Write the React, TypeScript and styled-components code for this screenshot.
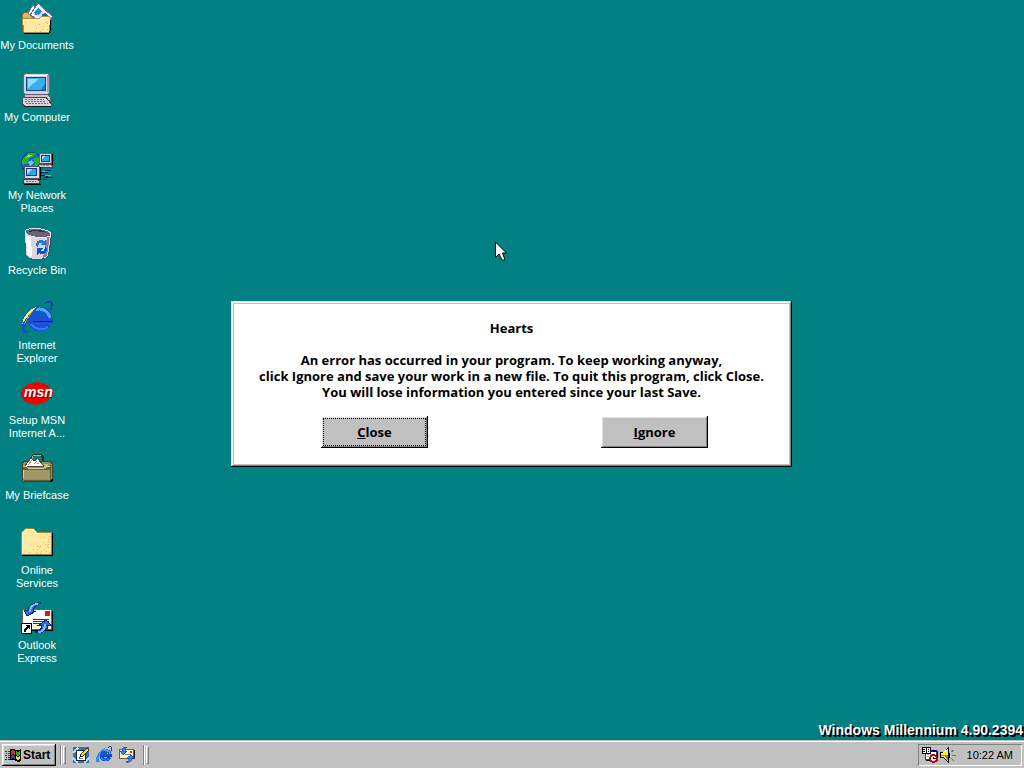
import React from "react";
import styled, { createGlobalStyle, css } from "styled-components";

const SANS = `"Liberation Sans", Arial, sans-serif`;
const SYSTEM = `"Open Sans", "Liberation Sans", sans-serif`;

const GlobalStyle = createGlobalStyle`
  *, *::before, *::after { box-sizing: border-box; }
  html, body { margin: 0; padding: 0; }
  body { background: #008080; font-family: ${SANS}; overflow: hidden; }
  button { font-family: inherit; }
`;

const Screen = styled.div`
  position: relative;
  display: flex;
  flex-direction: column;
  min-height: 100vh;
  background: #008080;
`;

const Desktop = styled.main`
  flex: 1;
  display: flex;
  justify-content: space-between;
`;

const IconColumn = styled.nav`
  display: grid;
  grid-template-rows: 72px 78px;
  grid-auto-rows: 75px;
  width: 74px;
  padding-top: 3px;
`;

const Shortcut = styled.a`
  display: flex;
  flex-direction: column;
  align-items: center;
  gap: 4px;
  color: #fff;
  font-size: 11px;
  line-height: 13px;
  text-align: center;
  text-decoration: none;
  white-space: pre;
`;

const IconArt = styled.svg<{ $size: number }>`
  display: block;
  flex: none;
  width: ${(p) => p.$size}px;
  height: ${(p) => p.$size}px;
  overflow: visible;
  shape-rendering: crispEdges;
`;

const Watermark = styled.p`
  align-self: flex-end;
  margin: 0;
  padding: 0 1px 2px 0;
  color: #fff;
  font-size: 14px;
  font-weight: bold;
  line-height: 16px;
  text-shadow: 1px 1px 0 #000, 2px 2px 0 #000;
`;

const DialogLayer = styled.div`
  position: absolute;
  inset: 0;
  display: grid;
  place-items: center;
  padding-right: 1px;
`;

const Dialog = styled.section`
  width: 561px;
  max-width: 100%;
  padding: 19px 0;
  background: #fff;
  color: #000;
  font-family: ${SYSTEM};
  font-size: 13px;
  font-weight: bold;
  line-height: 16px;
  text-align: center;
  box-shadow:
    inset -1px -1px 0 #000,
    inset 1px 1px 0 #dfdfdf,
    inset -2px -2px 0 #808080,
    inset 2px 2px 0 #fff,
    inset 3px 3px 0 #c0c0c0,
    inset -3px -3px 0 #c0c0c0;
`;

const DialogTitle = styled.h1`
  margin: 0 0 16px;
  font: inherit;
`;

const DialogText = styled.p`
  margin: 0 0 16px;
`;

const DialogActions = styled.div`
  display: flex;
  justify-content: center;
  gap: 173px;
  padding-left: 6px;
`;

const raised = css`
  border: 0;
  background: #c0c0c0;
  box-shadow:
    inset -1px -1px 0 #000,
    inset 1px 1px 0 #fff,
    inset -2px -2px 0 #808080,
    inset 2px 2px 0 #dfdfdf;
`;

const DialogButton = styled.button<{ $focused?: boolean }>`
  ${raised}
  width: 107px;
  height: 32px;
  padding: 0;
  color: #000;
  font-size: 13px;
  font-weight: bold;
  line-height: 16px;
  outline: ${(p) => (p.$focused ? "1px dotted #000" : "none")};
  outline-offset: -3px;
`;

const Taskbar = styled.footer`
  display: flex;
  align-items: center;
  height: 28px;
  padding: 2px 2px 0;
  background: #c0c0c0;
  box-shadow: inset 0 1px 0 #c0c0c0, inset 0 2px 0 #fff;
`;

const StartButton = styled.button`
  ${raised}
  display: flex;
  align-items: center;
  gap: 2px;
  width: 54px;
  height: 22px;
  padding: 0 3px;
  color: #000;
  font-size: 12px;
  font-weight: bold;
  line-height: 14px;
`;

const Divider = styled.span`
  width: 2px;
  height: 20px;
  margin-left: 4px;
  border-left: 1px solid #808080;
  border-right: 1px solid #fff;
`;

const Grip = styled.span`
  width: 3px;
  height: 18px;
  margin-left: 1px;
  border: 1px solid;
  border-color: #fff #808080 #808080 #fff;
`;

const QuickLaunch = styled.div`
  display: flex;
  gap: 7px;
  padding: 0 4px 0 7px;
`;

const QuickButton = styled.button`
  width: 16px;
  height: 16px;
  padding: 0;
  border: 0;
  background: transparent;
`;

const Tray = styled.div`
  display: flex;
  align-items: center;
  gap: 2px;
  height: 22px;
  margin-left: auto;
  padding: 0 9px 0 4px;
  box-shadow: inset 1px 1px 0 #808080, inset -1px -1px 0 #fff;
`;

const Clock = styled.time`
  margin-left: 9px;
  color: #000;
  font-size: 11px;
  line-height: 13px;
`;

const Pointer = styled.svg`
  position: absolute;
  left: 495px;
  top: 241px;
  width: 12px;
  height: 20px;
  pointer-events: none;
`;

function Art({ size = 32, children }: { size?: number; children: React.ReactNode }) {
  return (
    <IconArt $size={size} viewBox={`0 0 ${size} ${size}`} aria-hidden="true">
      {children}
    </IconArt>
  );
}

const Documents = () => (
  <Art>
    <path d="M1 27V12l2-3h6l2 3h17v15z" fill="#d8b860" stroke="#806830" />
    <path d="M7 10 12 2l7 9-5 6z" fill="#fff" stroke="#6080b0" />
    <path d="M9 12 17 0 32 14 23 20z" fill="#fff" stroke="#5070a8" />
    <path d="m12 11 5-7 9 9-3 4z" fill="#c8e4ff" />
    <path d="m13 9 4 1-2 3zM17 5l4 4-4 3-3-4z" fill="#3080d8" />
    <path d="m21 11 3-1 3 3-5 2z" fill="#2060b0" />
    <path d="M1 15h18l3-2h6l2 2-2 14H3z" fill="#ffe9a0" stroke="#b08840" />
    <path d="M2 16h17l3-2h5" stroke="#fffbd8" fill="none" />
    <path d="M15 25.500h1m2-4h1m2 5h1m2-7h1m-3 4h1m3 3h1m-1-6h1m-8 8h1m-6 0h1" stroke="#e8b070" />
    <path d="M3 30h25l1-2 1-11" stroke="#000" fill="none" />
  </Art>
);

const Computer = () => (
  <Art>
    <path d="M5 0 7-2h19l3 1v19l-3 2H8l-3-2z" fill="#000" />
    <path d="M2.500-.5l2-1h22l2 1v18l-2 2h-22l-2-2z" fill="#d4d0d8" stroke="#686880" />
    <path d="M4 0h22" stroke="#fff" />
    <path d="M27 0v17" stroke="#a09cb0" strokeWidth="2" />
    <rect x="5" y="2" width="20" height="14" fill="#184890" />
    <rect x="6" y="3" width="18" height="12" fill="#38b0f0" />
    <path d="M7 4h11L7 13z" fill="#90e0ff" />
    <path d="M20 15 24 8v7z" fill="#1880d0" />
    <path d="M3 19h23l3 3v3H3z" fill="#c8c4cc" stroke="#605c70" />
    <path d="M19 22.500h7" stroke="#404050" />
    <path d="M2 22h23l6 8-1 1H4l-3-2z" fill="#d8d4dc" stroke="#484858" />
    <path d="M4 24.500h19M4 26.500h21M5 28.500h22" stroke="#706c80" strokeDasharray="2 1" />
    <path d="M3 31.500h27" stroke="#201820" />
  </Art>
);

const Monitor = ({ x, y, scale = 1 }: { x: number; y: number; scale?: number }) => (
  <g transform={`translate(${x} ${y}) scale(${scale})`}>
    <path d="M1 1h16v13H1z" fill="#000" />
    <path d="M0 0h15v12H0z" fill="#dcd8e0" stroke="#505068" />
    <path d="M2 2h11v8H2z" fill="#103878" />
    <path d="M3 3h9v6H3z" fill="#28a8e8" />
    <path d="M3 3h6L3 8z" fill="#a0e8ff" />
    <path d="M0 13h14l2 4H-1z" fill="#d0ccd4" stroke="#404050" />
    <path d="M2 15h10" stroke="#787488" strokeDasharray="2 1" />
  </g>
);

const Network = () => (
  <Art>
    <circle cx="11" cy="10" r="10.5" fill="#1868c0" stroke="#084858" />
    <path d="M2 5 7 0h8l-3 4-4 1-1 5-5 2-1-3zM12 6l5-2 3 7-4 7-5-4 3-4zM3 14l4 2 2 4-5-2z" fill="#28b030" />
    <path d="M4 5 8 2h4L8 4z" fill="#a0f070" />
    <path d="m7 9 4-2 2 3-4 3z" fill="#70c8f8" />
    <Monitor x={18} y={0} scale={0.85} />
    <path d="M20 19h6l-2-2h6m-10 5h8l-3 2h7m-10 2h4" stroke="#001858" fill="none" />
    <path d="M21 18h5m-2 4h6" stroke="#60b0e0" />
    <Monitor x={3} y={13} />
    <path d="M3 31h17" stroke="#000" />
  </Art>
);

const RecycleBin = () => (
  <Art>
    <path d="m5 3 2 25 6 3 9 0 6-3L31 6z" fill="#504868" />
    <path d="m4 3 1 24c2 3 7 4 11 4 5 0 9-1 11-3L30 6z" fill="#d8d4e0" />
    <path d="m5 8 1 19 5 2-1-20z" fill="#fff" />
    <path d="m26 9 3-2-3 21-4 2z" fill="#888498" />
    <ellipse cx="17" cy="5" rx="13" ry="4.5" transform="rotate(6 17 5)" fill="#686478" stroke="#e8e4f0" />
    <path d="M7 4c3-3 15-3 19 1-4-2-14-2-19-1z" fill="#383448" />
    <path d="M15 18c0-5 4-8 8-5l2-2v6h-6l2-2c-2-1-4 1-4 4z" fill="#1878e8" />
    <path d="M26 20c0 5-4 8-8 5l-2 2v-7h6l-2 3c2 1 4-1 4-4z" fill="#1050c8" />
  </Art>
);

const ExplorerShape = () => (
  <>
    <path
      d="M27 21c-2 3-4 4-8 4-6 0-9-4-9-9s4-9 9-9 9 4 9 9v.5H11"
      fill="none"
      stroke="#1850d8"
      strokeWidth="7"
    />
    <path d="M15 7c5-3 12 1 14 8" fill="none" stroke="#48a8ff" strokeWidth="3" />
    <path d="M10 21c4 5 11 7 17 3" fill="none" stroke="#3080f0" strokeWidth="2" />
    <path d="M12 18.500h20" stroke="#082070" />
    <path d="M14 13h9c0-3-8-4-9 0z" fill="#0868a0" />
  </>
);

const Explorer = () => (
  <Art>
    <ExplorerShape />
    <path d="M24 0c4-2 7-2 7 2 0 2-1 4-2 5" fill="none" stroke="#0838a0" strokeWidth="1.5" />
    <path d="M20 2C9 4 0 17 1 27c0 4 5 4 9 1-3 1-6 1-6-2C5 18 11 8 20 2z" fill="#1850b8" />
    <path d="M17 3C8 6 1 15 1 22 5 15 9 9 17 3z" fill="#ffe890" />
    <path d="M12 8C7 12 4 17 3 22c4-6 6-10 9-14z" fill="#b89830" />
  </Art>
);

const Msn = () => (
  <Art>
    <ellipse cx="16" cy="16" rx="15" ry="10.5" transform="rotate(-8 16 16)" fill="#a83000" />
    <ellipse cx="15" cy="15" rx="15" ry="10.5" transform="rotate(-8 15 15)" fill="#f00000" />
    <text x="4" y="20" fill="#800000" fontFamily={SANS} fontSize="14" fontWeight="bold" fontStyle="italic">msn</text>
    <text x="3" y="19" fill="#fff" fontFamily={SANS} fontSize="14" fontWeight="bold" fontStyle="italic">msn</text>
  </Art>
);

const Briefcase = () => (
  <Art>
    <path d="M2 10h29l1 2v15l-2 2H2z" fill="#000" />
    <path d="M11 9V4l2-2h7l2 2v5" fill="none" stroke="#383010" strokeWidth="2" />
    <path d="M11 8V4l2-2h7" fill="none" stroke="#b8b078" />
    <path d="M1 11 3 8h26l2 3v15l-2 2H2l-1-2z" fill="#989060" stroke="#484020" />
    <path d="m4 13 6-8 4 3 2-3 7 8z" fill="#fff" stroke="#504830" />
    <path d="m7 12 4-5m2 4 3-3m0 3 2-1" stroke="#909090" />
    <path d="M2 14h3l2 2h17l2-2h4v3H2z" fill="#686030" />
    <path d="M2 17h27v9H2z" fill="#a09868" />
    <path d="M2 13h3l2 2h16l3-2h3M2 17v8" stroke="#d8d0a0" fill="none" />
    <path d="M29 12v15M3 27h26" stroke="#605830" />
    <path d="M23 11h4v3h-4z" fill="#c8c078" />
  </Art>
);

const Folder = () => (
  <Art>
    <path d="M1 27.500h30.500V5" fill="none" stroke="#000" />
    <path d="M.5 26.500V4.500l4-4h8l4 4h14v22z" fill="#ffe9a0" stroke="#a88030" />
    <path d="M1.500 25V5.500h15M5 1.500h7l3 3" fill="none" stroke="#fffbd0" />
    <path d="M8 24.500h1m3-3h1m3 4h1m2-7h1m-4 3h1m6 0h1m2-4h1m-2 6h1m3 1h1m-3-5h1m0-5h1m-5 2h1m-6 9h1m-4-7h1m10-5h1m-5 8h1m4 4h1m-11-6h1m-4 6h1" stroke="#f0a868" />
    <path d="M26 6.500h1m2 2h1m-3 3h1m-5-2h1m-2 5h1m4 2h1m-3 3h1m-6 4h1" stroke="#f0b880" />
  </Art>
);

const BlueArrows = () => (
  <>
    <path d="M20 0C12-1 7 3 7 7H3l3 6 9-5h-3c0-4 3-6 8-8z" fill="#3068e0" stroke="#082880" />
    <path d="M17 1c-6 0-8 3-8 8" fill="none" stroke="#80c0ff" strokeWidth="2" />
    <path d="M14 29c7 2 13-2 13-7h3l-5-5-7 5h3c0 4-2 6-7 7z" fill="#3068e0" stroke="#082880" />
    <path d="M17 29c5 0 7-3 7-8" fill="none" stroke="#80c0ff" strokeWidth="2" />
  </>
);

const Outlook = () => (
  <Art>
    <path d="M2 8h30v20H2z" fill="#000" />
    <path d="M1.500 6.500h29v20h-29z" fill="#fff" stroke="#686050" />
    <path d="M3 22h26v3H3z" fill="#fff0b0" />
    <path d="M24 8h5v5h-5z" fill="#d81820" />
    <path d="M12 16.500h16M12 18.500h16M12 20.500h12" stroke="#103890" />
    <BlueArrows />
    <path d="M.5 20.500h10v10H.5z" fill="#fff" stroke="#000" />
    <path d="M3 29c0-3 1-4 3-5L4 22h5v5l-1-2c-2 1-3 2-3 4z" fill="#000" />
  </Art>
);

const WindowsFlag = () => (
  <Art size={16}>
    <path d="M5 2c3-1 4 0 6 1 2 1 3 0 5-1v12c-2 1-3 1-5 0-2-1-3-2-6-1z" fill="#000" />
    <path d="M6 4c2-1 3-1 4 0v4C9 7 8 7 6 8z" fill="#f02020" />
    <path d="M11 4c1 1 3 1 4 0v4c-2 1-3 1-4 0z" fill="#20b020" />
    <path d="M6 9c2-1 3-1 4 0v3c-1-1-2-1-4 0z" fill="#2040e0" />
    <path d="M11 9c1 1 3 1 4 0v3c-1 1-3 1-4 0z" fill="#f8e010" />
    <path d="M0 4.500h2m1 0h2M1 6.500h1m1 0h2M0 8.500h2m1 0h2" stroke="#b01010" />
    <path d="M1 10.500h1m1 0h2M0 12.500h2m1 0h2" stroke="#102090" />
  </Art>
);

const ShowDesktop = () => (
  <Art size={16}>
    <path d="M0 0h16v16H0z" fill="#3870a8" />
    <path d="m0 6 5-5M0 11l5 5M11 16l5-5" stroke="#c0e0f8" strokeWidth="2" />
    <path d="M3.500 3.500h9v10h-9z" fill="#fff" stroke="#102848" />
    <path d="M6 11.500h4" stroke="#808080" fill="none" />
    <path d="m7 10 1-3 6-6 2 2-6 6z" fill="#ffd040" stroke="#403010" />
    <path d="m7 10 0-2 2 1z" fill="#000" />
  </Art>
);

const QuickExplorer = () => (
  <Art size={16}>
    <g transform="scale(.5)">
      <ExplorerShape />
      <path d="M24 1c5-3 9-2 6 7" fill="none" stroke="#0838a0" strokeWidth="2" />
      <path d="M20 1C8 4-1 18 0 28c2 4 6 3 10 1-4 1-5-2-4-6C7 16 12 7 20 1z" fill="#3090e8" />
    </g>
  </Art>
);

const QuickOutlook = () => (
  <Art size={16}>
    <path d="M1 3h15v9H1z" fill="#202020" />
    <path d="M.5 2.500h14v9H.5z" fill="#fff8d8" stroke="#706030" />
    <path d="M11 4h2v2h-2z" fill="#e02020" />
    <path d="M6 7.500h6" stroke="#7088a8" />
    <path d="M8 0C4 0 3 2 3 4H1l3 4 4-4H6c0-2 0-3 2-4zM7 15c5 1 6-2 6-4h2l-3-3-4 3h2c0 2-1 3-3 4z" fill="#3880f0" stroke="#103080" strokeWidth=".6" />
  </Art>
);

const Scheduler = () => (
  <Art size={16}>
    <path d="M4 4h12v10H4z" fill="#000" />
    <path d="M3.500 3.500h11v9h-11z" fill="#fff" stroke="#404040" />
    <path d="M8 3h7v2H8z" fill="#000080" />
    <path d="M5 7.500h2m1 0h2m1 0h2M5 9.500h2" stroke="#a0a0a0" />
    <path d="M0 0h9v7H0z" fill="#000" />
    <path d="M1 1.500h2M1 3.500h2M1 5.500h2M3.500 1v5M5 1.500h3M5 3.500h3M5 5.500h3M5.500 1v5M7.500 1v5" stroke="#fff" />
    <circle cx="11.500" cy="11.500" r="3.500" fill="#fff" stroke="#c00000" strokeWidth="1.700" />
    <path d="M11.500 9.500v2h2" fill="none" stroke="#000" />
  </Art>
);

const Speaker = () => (
  <Art size={16}>
    <path d="M.5 5.500h3l5-5v15l-5-5h-3z" fill="#f8f040" stroke="#000" />
    <path d="M1 8.500h3l4 5v-6z" fill="#989000" />
    <path d="M3 6 8 2" stroke="#fff" />
    <path d="M9.500 5.500v5" fill="none" stroke="#000" />
    <path d="m11 5 3-2m-2 5.500h4m-5 3 3 2" stroke="#707070" />
  </Art>
);

const shortcuts = [
  { label: "My Documents", Icon: Documents },
  { label: "My Computer", Icon: Computer },
  { label: "My Network\nPlaces", Icon: Network },
  { label: "Recycle Bin", Icon: RecycleBin },
  { label: "Internet\nExplorer", Icon: Explorer },
  { label: "Setup MSN\nInternet A...", Icon: Msn },
  { label: "My Briefcase", Icon: Briefcase },
  { label: "Online\nServices", Icon: Folder },
  { label: "Outlook\nExpress", Icon: Outlook },
];

const quickItems = [
  { name: "Show Desktop", Icon: ShowDesktop },
  { name: "Launch Internet Explorer", Icon: QuickExplorer },
  { name: "Launch Outlook Express", Icon: QuickOutlook },
];

export default function App() {
  return (
    <Screen>
      <GlobalStyle />
      <Desktop>
        <IconColumn>
          {shortcuts.map(({ label, Icon }) => (
            <Shortcut key={label} href="#">
              <Icon />
              <span>{label}</span>
            </Shortcut>
          ))}
        </IconColumn>
        <Watermark>Windows Millennium 4.90.2394</Watermark>
      </Desktop>

      <Taskbar>
        <StartButton>
          <WindowsFlag />
          Start
        </StartButton>
        <Divider />
        <Grip />
        <QuickLaunch>
          {quickItems.map(({ name, Icon }) => (
            <QuickButton key={name} aria-label={name}>
              <Icon />
            </QuickButton>
          ))}
        </QuickLaunch>
        <Divider />
        <Grip />
        <Tray>
          <Scheduler />
          <Speaker />
          <Clock>10:22 AM</Clock>
        </Tray>
      </Taskbar>

      <DialogLayer>
        <Dialog role="alertdialog" aria-labelledby="dialog-title" aria-describedby="dialog-text">
          <DialogTitle id="dialog-title">Hearts</DialogTitle>
          <DialogText id="dialog-text">
            An error has occurred in your program. To keep working anyway,
            <br />
            click Ignore and save your work in a new file. To quit this program, click Close.
            <br />
            You will lose information you entered since your last Save.
          </DialogText>
          <DialogActions>
            <DialogButton $focused>
              <u>C</u>lose
            </DialogButton>
            <DialogButton>
              <u>I</u>gnore
            </DialogButton>
          </DialogActions>
        </Dialog>
      </DialogLayer>

      <Pointer viewBox="0 0 12 20" aria-hidden="true">
        <path d="M.5 1v15.500l3.500-3.500 3 6h2.500v-1.500L7.500 12h4z" fill="#fff" stroke="#000" />
      </Pointer>
    </Screen>
  );
}
